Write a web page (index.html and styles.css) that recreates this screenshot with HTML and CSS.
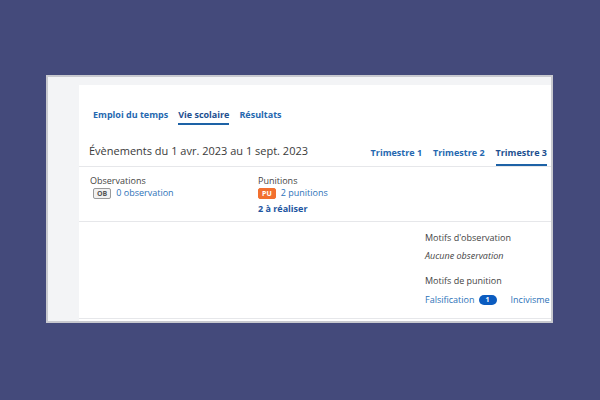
FILE: index.html
```html
<!DOCTYPE html>
<html>
	<head>
		<meta charset="UTF-8">
		<title>Vie scolaire</title>
		<link rel="stylesheet" href="styles.css">
	</head>
	<body>
		<div class="frame">
			<div class="side"></div>
			<div class="main">
				<div class="tabs">
					<a href="#" class="tab">Emploi du temps</a>
					<a href="#" class="tab active">Vie scolaire</a>
					<a href="#" class="tab">Résultats</a>
				</div>
				<div class="period">
					<h3 class="period-title">Évènements du 1 avr. 2023 au 1 sept. 2023</h3>
					<div class="terms">
						<a href="#" class="term">Trimestre 1</a>
						<a href="#" class="term">Trimestre 2</a>
						<a href="#" class="term active">Trimestre 3</a>
					</div>
				</div>
				<div class="summary">
					<div class="sum-col">
						<p class="sum-label">Observations</p>
						<p class="sum-line"><span class="tag tag-ob">OB</span><a href="#">0 observation</a></p>
					</div>
					<div class="sum-col">
						<p class="sum-label">Punitions</p>
						<p class="sum-line"><span class="tag tag-pu">PU</span><a href="#">2 punitions</a></p>
						<a href="#" class="todo">2 à réaliser</a>
					</div>
				</div>
				<div class="details">
					<div class="motifs">
						<p class="motif-title">Motifs d'observation</p>
						<p class="motif-none">Aucune observation</p>
						<p class="motif-title">Motifs de punition</p>
						<p class="motif-list">
							<a href="#">Falsification</a><span class="count">1</span>
							<a href="#" class="next">Incivisme</a>
						</p>
					</div>
				</div>
			</div>
		</div>
	</body>
</html>
```
FILE: styles.css
```css
html,body,div,h3,p,span,a {
	margin: 0;
	padding: 0;
}
body {
	background-color: #444a7b;
	font-family: "Open Sans", "Noto Sans", sans-serif;
	color: #333;
}
a {
	text-decoration: none;
	color: #2d72b8;
}

.frame {
	width: 503px;
	height: 244px;
	margin: 75px 0 0 46px;
	border: 2px solid #c8c9cf;
	background-color: #f3f4f6;
	display: flex;
	overflow: hidden;
}
.side {
	width: 31px;
	flex: none;
}
.main {
	flex: 1;
	margin-top: 8px;
	background-color: #fff;
	display: flex;
	flex-direction: column;
	overflow: hidden;
}

.tabs {
	display: flex;
	gap: 10px;
	padding: 23px 0 0 14px;
}
.tab {
	font-size: 9px;
	font-weight: bold;
	line-height: 13px;
	color: #2568b0;
	padding-bottom: 2px;
	border-bottom: 2px solid transparent;
}
.tab.active {
	color: #1d4f8f;
	border-bottom-color: #1d62a6;
}

.period {
	display: flex;
	align-items: flex-end;
	margin-top: 18px;
	padding: 0 4px 0 10px;
	border-bottom: 1px solid #e6e7ea;
}
.period-title {
	font-size: 11px;
	font-weight: normal;
	line-height: 16px;
	color: #3a3a3a;
	padding-bottom: 7px;
}
.terms {
	margin-left: auto;
	display: flex;
	gap: 11px;
}
.term {
	font-size: 9px;
	font-weight: bold;
	line-height: 13px;
	color: #2568b0;
	padding-bottom: 5px;
	border-bottom: 2px solid transparent;
}
.term.active {
	color: #1d4f8f;
	border-bottom-color: #1d62a6;
}

.summary {
	display: flex;
	height: 55px;
	padding: 8px 0 0 11px;
	box-sizing: border-box;
	border-bottom: 1px solid #e6e7ea;
	font-size: 9px;
}
.sum-col {
	width: 168px;
}
.sum-label {
	color: #444;
	line-height: 12px;
}
.sum-line {
	display: flex;
	align-items: center;
	gap: 5px;
	line-height: 12px;
}
.tag {
	font-size: 7px;
	font-weight: bold;
	line-height: 9px;
	padding: 0 3px;
	border-radius: 2px;
}
.tag-ob {
	margin-left: 3px;
	color: #555;
	background-color: #f1f1f1;
	border: 1px solid #9a9a9a;
}
.tag-pu {
	color: #fff;
	background-color: #f2702f;
	border: 1px solid #f2702f;
}
.todo {
	display: block;
	margin-top: 4px;
	font-weight: bold;
	color: #1d55a0;
	line-height: 12px;
}

.details {
	height: 96px;
	border-bottom: 1px solid #e6e7ea;
	font-size: 9px;
}
.motifs {
	padding: 10px 0 0 346px;
	white-space: nowrap;
}
.motif-title {
	color: #444;
	line-height: 12px;
}
.motif-none {
	font-style: italic;
	color: #444;
	line-height: 12px;
	margin: 6px 0 13px;
}
.motif-list {
	display: flex;
	align-items: center;
	line-height: 12px;
	margin-top: 7px;
}
.count {
	font-size: 7px;
	font-weight: bold;
	color: #fff;
	background-color: #0b5cc0;
	border-radius: 6px;
	line-height: 10px;
	padding: 0 7px;
	margin-left: 4px;
}
.motif-list .next {
	margin-left: 14px;
}
```
